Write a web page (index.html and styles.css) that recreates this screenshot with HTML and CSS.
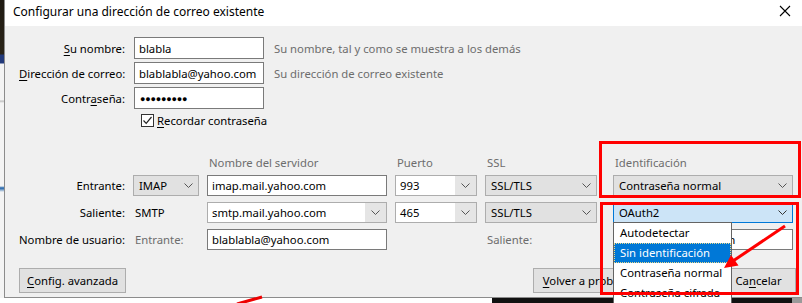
FILE: index.html
```html
<!DOCTYPE html>
<html lang="es">

<head>
    <meta charset="UTF-8">
    <title>Configurar una dirección de correo existente</title>
    <link rel="stylesheet" href="styles.css">
</head>

<body>
<div class="desktop">
    <div class="backdrop-left"></div>

    <div class="dialog">
        <div class="titlebar">
            <span>Configurar una dirección de correo existente</span>
            <svg class="close" width="12" height="12" viewBox="0 0 12 12">
                <path d="M1 1 L11 11 M11 1 L1 11" stroke="#000" stroke-width="1.1" fill="none"/>
            </svg>
        </div>

        <div class="content">
            <div class="account">
                <label class="lbl"><u>S</u>u nombre:</label>
                <div class="input">blabla</div>
                <span class="hint">Su nombre, tal y como se muestra a los demás</span>

                <label class="lbl"><u>D</u>irección de correo:</label>
                <div class="input">blablabla@yahoo.com</div>
                <span class="hint">Su dirección de correo existente</span>

                <label class="lbl">Contr<u>a</u>seña:</label>
                <div class="input dots">●●●●●●●●●</div>
                <span></span>

                <span></span>
                <label class="check">
                    <span class="box">
                        <svg width="11" height="11" viewBox="0 0 11 11">
                            <path d="M1.5 5.5 L4.2 8.3 L9.5 2" stroke="#222" stroke-width="1.2" fill="none"/>
                        </svg>
                    </span>
                    <span><u>R</u>ecordar contraseña</span>
                </label>
                <span></span>
            </div>

            <div class="server">
                <span></span>
                <span></span>
                <span class="head">Nombre del servidor</span>
                <span class="head">Puerto</span>
                <span class="head">SSL</span>
                <span class="head">Identificación</span>

                <span class="lbl">Entrante:</span>
                <div class="select">IMAP<svg class="chev" width="9" height="5" viewBox="0 0 9 5"><path d="M0.5 0.5 L4.5 4.5 L8.5 0.5" stroke="#555" fill="none"/></svg></div>
                <div class="input">imap.mail.yahoo.com</div>
                <div class="combo"><span class="val">993</span><span class="btn"><svg width="9" height="5" viewBox="0 0 9 5"><path d="M0.5 0.5 L4.5 4.5 L8.5 0.5" stroke="#555" fill="none"/></svg></span></div>
                <div class="select ssl">SSL/TLS<svg class="chev" width="9" height="5" viewBox="0 0 9 5"><path d="M0.5 0.5 L4.5 4.5 L8.5 0.5" stroke="#555" fill="none"/></svg></div>
                <div class="select">Contraseña normal<svg class="chev" width="9" height="5" viewBox="0 0 9 5"><path d="M0.5 0.5 L4.5 4.5 L8.5 0.5" stroke="#555" fill="none"/></svg></div>

                <span class="lbl">Saliente:</span>
                <span class="plain">SMTP</span>
                <div class="combo"><span class="val">smtp.mail.yahoo.com</span><span class="btn"><svg width="9" height="5" viewBox="0 0 9 5"><path d="M0.5 0.5 L4.5 4.5 L8.5 0.5" stroke="#555" fill="none"/></svg></span></div>
                <div class="combo"><span class="val">465</span><span class="btn"><svg width="9" height="5" viewBox="0 0 9 5"><path d="M0.5 0.5 L4.5 4.5 L8.5 0.5" stroke="#555" fill="none"/></svg></span></div>
                <div class="select ssl">SSL/TLS<svg class="chev" width="9" height="5" viewBox="0 0 9 5"><path d="M0.5 0.5 L4.5 4.5 L8.5 0.5" stroke="#555" fill="none"/></svg></div>
                <div class="select focused">OAuth2<svg class="chev" width="9" height="5" viewBox="0 0 9 5"><path d="M0.5 0.5 L4.5 4.5 L8.5 0.5" stroke="#333" fill="none"/></svg>
                    <ul class="dropdown">
                        <li>Autodetectar</li>
                        <li class="active">Sin identificación</li>
                        <li>Contraseña normal</li>
                        <li>Contraseña cifrada</li>
                        <li>Kerberos / GSSAPI</li>
                    </ul>
                </div>

                <span class="lbl">Nombre de usuario:</span>
                <span class="plain muted">Entrante:</span>
                <div class="input">blablabla@yahoo.com</div>
                <span></span>
                <span class="plain muted">Saliente:</span>
                <div class="input">blablabla@yahoo.com</div>
            </div>

            <div class="actions">
                <button class="btn-win"><u>C</u>onfig. avanzada</button>
                <div class="actions-right">
                    <button class="btn-win wide"><u>V</u>olver a probar</button>
                    <button class="btn-win">Hecho</button>
                    <button class="btn-win">Ca<u>n</u>celar</button>
                </div>
            </div>
        </div>
    </div>

    <div class="backdrop-bottom">
        <span class="under-text">Cómo configurar una cuenta de correo electrónico</span>
        <span class="bar"></span>
    </div>

    <svg class="annot" width="802" height="303" viewBox="0 0 802 303">
        <rect x="600.5" y="142.5" width="199" height="54" fill="none" stroke="#f00" stroke-width="3"/>
        <rect x="601.5" y="203.5" width="196" height="90" fill="none" stroke="#f00" stroke-width="3"/>
        <line x1="785" y1="226" x2="733" y2="261" stroke="#f00" stroke-width="3"/>
        <polygon points="724,268 738.5,265.5 731,255" fill="#f00"/>
        <line x1="237" y1="304" x2="262" y2="297" stroke="#e00" stroke-width="3"/>
    </svg>
</div>
</body>

</html>
```

FILE: styles.css
```css
body {
    margin: 0;
    background: #fff;
    font-family: 'Noto Sans', 'Segoe UI', Arial, sans-serif;
    font-size: 11.3px;
    color: #000;
}

u {
    text-decoration: underline;
    text-underline-offset: 2px;
}

.desktop {
    position: relative;
    width: 802px;
    height: 303px;
    overflow: hidden;
    display: grid;
    grid-template-columns: 4px 798px;
    grid-template-rows: 298px 5px;
}

.backdrop-left {
    background: linear-gradient(#1f1a12 0, #2a2418 54px, #233a7a 55px, #233a7a 63px, #f4f4f4 64px, #f4f4f4 100px, #bdbdbd 101px, #f4f4f4 103px, #f4f4f4 186px, #1b5fa8 188px, #f4f4f4 192px);
}

.dialog {
    display: flex;
    flex-direction: column;
    border-left: 1px solid #8c8c8c;
    border-bottom: 1px solid #8c8c8c;
    background: #f0f0f0;
}

.titlebar {
    height: 26px;
    flex: none;
    display: flex;
    align-items: center;
    justify-content: space-between;
    padding: 0 8px 4px 8px;
    box-sizing: border-box;
    background: #fff;
    font-size: 12px;
}

.close {
    margin-right: 3px;
}

.content {
    flex: 1;
    padding: 11px 0 0 14px;
}

/* account block */
.account {
    display: grid;
    grid-template-columns: 106px 130px auto;
    grid-template-rows: 22px 22px 22px 16px;
    column-gap: 9px;
    row-gap: 3px;
    align-items: center;
}

.lbl {
    text-align: right;
    white-space: nowrap;
}

.hint {
    color: #6d6d6d;
    margin-left: 1px;
}

.input {
    height: 100%;
    box-sizing: border-box;
    border: 1px solid #7a7a7a;
    background: #fff;
    padding: 0 4px;
    display: flex;
    align-items: center;
    white-space: nowrap;
    overflow: hidden;
}

.dots {
    font-size: 9px;
    letter-spacing: -0.2px;
    padding-left: 5px;
}

.check {
    display: flex;
    align-items: center;
    gap: 3px;
    margin-left: 7px;
    white-space: nowrap;
}

.box {
    width: 13px;
    height: 13px;
    box-sizing: border-box;
    border: 1px solid #333;
    background: #fff;
    display: flex;
    align-items: center;
    justify-content: center;
}

/* server block */
.server {
    margin-top: 21px;
    display: grid;
    grid-template-columns: 106px 66px 180px 82px 120px 180px;
    grid-template-rows: 20px repeat(3, 21px);
    column-gap: 8px;
    row-gap: 6px;
    align-items: center;
}

.head {
    align-self: end;
    line-height: 12px;
    color: #6d6d6d;
    padding-left: 2px;
    white-space: nowrap;
}

.plain {
    padding-left: 2px;
}

.muted {
    color: #6d6d6d;
}

.select {
    position: relative;
    height: 100%;
    box-sizing: border-box;
    border: 1px solid #adadad;
    background: #e1e1e1;
    padding: 0 5px;
    display: flex;
    align-items: center;
    justify-content: space-between;
    white-space: nowrap;
}

.select.ssl {
    width: 112px;
}

.select.focused {
    background: #cce4f7;
    border-color: #0078d7;
}

.combo {
    height: 100%;
    box-sizing: border-box;
    border: 1px solid #adadad;
    background: #fff;
    display: flex;
}

.combo .val {
    flex: 1;
    display: flex;
    align-items: center;
    padding-left: 4px;
    white-space: nowrap;
}

.combo .btn {
    width: 21px;
    background: #e5e5e5;
    display: flex;
    align-items: center;
    justify-content: center;
}

/* open list of the OAuth2 select */
.dropdown {
    position: absolute;
    top: 100%;
    left: -1px;
    width: 117px;
    margin: 0;
    padding: 0;
    list-style: none;
    background: #fff;
    border: 1px solid #646464;
    z-index: 2;
}

.dropdown li {
    height: 20px;
    line-height: 20px;
    padding-left: 6px;
    white-space: nowrap;
    color: #000;
}

.dropdown li.active {
    background: #0078d7;
    color: #fff;
    outline: 1px dotted #e9d98a;
    outline-offset: -1px;
}

/* buttons */
.actions {
    margin-top: 18px;
    margin-right: 6px;
    display: flex;
    justify-content: space-between;
}

.actions-right {
    display: flex;
    gap: 6px;
}

.btn-win {
    height: 25px;
    min-width: 75px;
    padding: 0 7px;
    border: 1px solid #adadad;
    background: #e1e1e1;
    font-family: inherit;
    font-size: 11.3px;
    color: #000;
}

.btn-win.wide {
    min-width: 101px;
}

.backdrop-bottom {
    grid-column: 1 / 3;
    display: flex;
    overflow: hidden;
    background: #fff;
}

.under-text {
    width: 470px;
    flex: none;
    padding-left: 22px;
    margin-top: 1px;
    font-size: 22px;
    line-height: 26px;
    color: #222;
    white-space: nowrap;
    overflow: hidden;
}

.bar {
    flex: 1;
    background: linear-gradient(90deg, #111 0, #111 300px, #9a9a9a 300px, #9a9a9a 315px, #111 315px);
}

.annot {
    position: absolute;
    top: 0;
    left: 0;
    pointer-events: none;
    z-index: 5;
}
```
